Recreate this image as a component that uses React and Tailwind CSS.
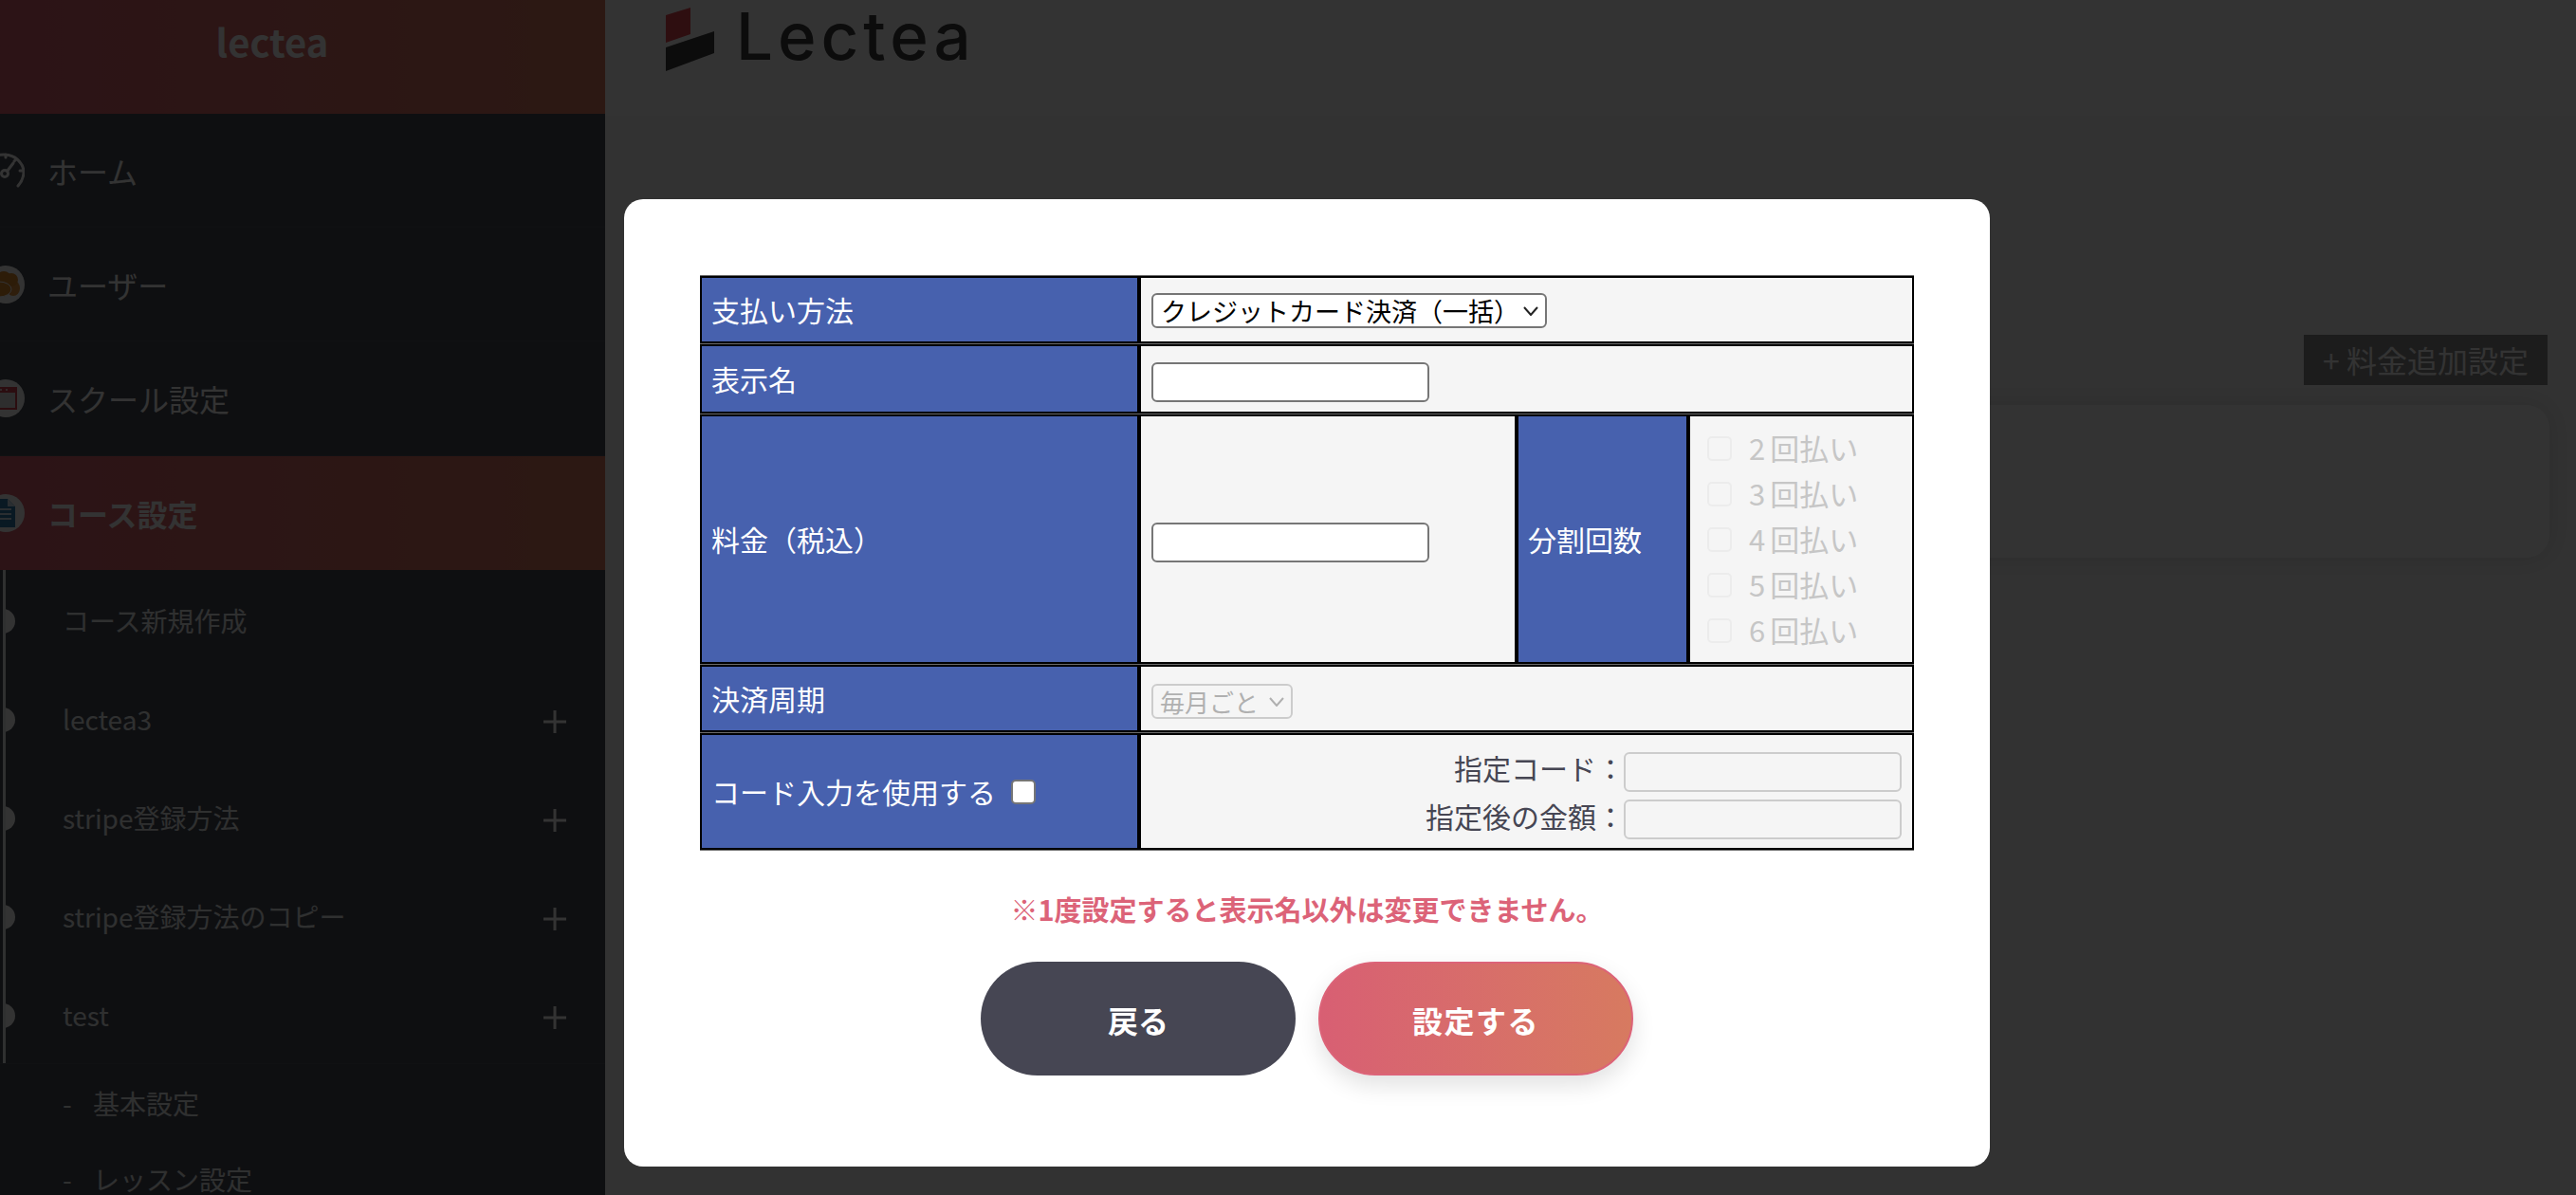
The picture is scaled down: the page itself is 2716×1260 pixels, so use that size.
import React from "react";

function GaugeIcon() {
  return (
    <svg viewBox="0 0 40 40" className="w-[40px] h-[40px] shrink-0 -ml-[14px]" fill="none" stroke="#fff" strokeWidth="3" strokeLinecap="round">
      <path d="M33 36 C40 28 41 18 35 11 C29 3 18 1 8 5 C-2 9 -6 18 -3 28" />
      <circle cx="19" cy="23" r="3.5" />
      <path d="M21.5 20.5 L28 12" />
      <path d="M20 3 V6 M39 20 H35 M31 8 L29 10" />
    </svg>
  );
}

function UserIcon() {
  return (
    <svg viewBox="0 0 40 40" className="w-[40px] h-[40px] shrink-0 -ml-[14px]">
      <circle cx="20" cy="20" r="20" fill="#fff" />
      <ellipse cx="28" cy="24" rx="7" ry="8" fill="#e8963c" />
      <circle cx="18" cy="14" r="8" fill="#e08a2c" />
      <circle cx="26" cy="15" r="7" fill="#e08a2c" />
      <ellipse cx="13" cy="25" rx="13" ry="8" fill="#e08a2c" stroke="#fff" strokeWidth="1" />
    </svg>
  );
}

function WindowIcon() {
  return (
    <svg viewBox="0 0 40 40" className="w-[40px] h-[40px] shrink-0 -ml-[14px]">
      <circle cx="20" cy="20" r="20" fill="#fff" />
      <rect x="-4" y="8" width="36" height="24" fill="#d8434f" />
      <rect x="-2" y="14" width="32" height="16" fill="#e4e4e4" />
      <circle cx="15" cy="11" r="1" fill="#fff" />
      <circle cx="21" cy="11" r="1" fill="#fff" />
    </svg>
  );
}

function DocIcon() {
  return (
    <svg viewBox="0 0 40 40" className="w-[40px] h-[40px] shrink-0 -ml-[14px]">
      <circle cx="20" cy="20" r="20" fill="#fff" />
      <path d="M-4 5 H22 L30 13 V35 H-4 Z" fill="#2f7fb0" />
      <path d="M22 5 L30 13 H22 Z" fill="#cfe6f5" />
      <path d="M0 16 H26 M0 21 H26 M0 26 H26" stroke="#cfe6f5" strokeWidth="2" />
    </svg>
  );
}

function PlusIcon() {
  return (
    <svg viewBox="0 0 24 24" className="w-[24px] h-[24px] shrink-0 ml-auto mr-[41px] mt-[3px]" stroke="#fff" strokeWidth="3">
      <path d="M12 0 V24 M0 12 H24" />
    </svg>
  );
}

function Chevron({ color, className }) {
  return (
    <svg viewBox="0 0 16 10" className={className} fill="none" stroke={color} strokeWidth="2">
      <path d="M1 1 L8 9 L15 1" />
    </svg>
  );
}

const mainItems = [
  { label: "ホーム", icon: <GaugeIcon />, h: "h-[120px]" },
  { label: "ユーザー", icon: <UserIcon />, h: "h-[120px]" },
  { label: "スクール設定", icon: <WindowIcon />, h: "h-[121px]" },
];

const subItems = [
  { label: "コース新規作成", plus: false },
  { label: "lectea3", plus: true },
  { label: "stripe登録方法", plus: true },
  { label: "stripe登録方法のコピー", plus: true },
  { label: "test", plus: true },
];

function Sidebar() {
  return (
    <aside className="w-[638px] shrink-0 h-full bg-[#464b55] text-white overflow-hidden">
      <div className="h-[120px] bg-gradient-to-r from-[#d9606f] to-[#d97a60] flex justify-center pr-[64px] pt-[15px]">
        <span className="text-[40px] leading-[56px] font-bold h-[56px]">lectea</span>
      </div>
      {mainItems.map((it) => (
        <div key={it.label} className={`${it.h} flex items-center gap-[24px] border-b border-white/5 text-[32px]`}>
          {it.icon}
          <span>{it.label}</span>
        </div>
      ))}
      <div className="h-[120px] bg-gradient-to-r from-[#d9606f] to-[#d97a60] flex items-center gap-[24px] text-[32px] font-bold">
        <DocIcon />
        <span>コース設定</span>
      </div>
      <div className="ml-[3px] h-[520px] pt-[2px] border-l-[3px] border-white/90 overflow-hidden">
        {subItems.map((it) => (
          <div key={it.label} className="h-[104px] flex items-center text-[28px] text-white/90">
            <span className="w-[26px] h-[26px] rounded-full bg-white shrink-0 -ml-[16px] mr-[50px]" />
            <span className="-mt-[3px]">{it.label}</span>
            {it.plus && <PlusIcon />}
          </div>
        ))}
      </div>
      <div className="border-t border-white/5 pt-[1px] text-[28px] text-white/90">
        <div className="h-[80px] flex items-center pl-[66px]">
          <span className="w-[32px]">-</span>
          <span>基本設定</span>
        </div>
        <div className="h-[80px] flex items-center pl-[66px]">
          <span className="w-[32px]">-</span>
          <span>レッスン設定</span>
        </div>
      </div>
    </aside>
  );
}

function Main() {
  return (
    <main className="flex-1 h-full bg-[#f8f8f8] flex flex-col">
      <header className="h-[122px] bg-white flex items-start pl-[64px] pt-[8px] gap-[23px]">
        <svg viewBox="0 0 51 67" className="w-[51px] h-[67px] shrink-0">
          <polygon points="0,8 26,0 26,28 0,37" fill="#e6454f" />
          <polygon points="0,42 51,25 51,48 0,67" fill="#3c3c3c" />
        </svg>
        <span className="font-['Inter',sans-serif] text-[69px] leading-[70px] tracking-[5px] font-medium text-[#3c3c3c] mt-[-5px]">Lectea</span>
      </header>
      <div className="flex justify-end pr-[30px] mt-[231px]">
        <button className="h-[53px] w-[257px] bg-[#8c8c8c] text-white text-[32px] leading-[53px] text-center">+ 料金追加設定</button>
      </div>
      <div className="mt-[21px] mx-[50px] mr-[28px] h-[161px] rounded-[24px] bg-white shadow-[0_0_24px_rgba(0,0,0,0.12)]" />
    </main>
  );
}

const th = "bg-[#4761ae] border-2 border-black text-white text-left text-[30px] font-normal px-[10px]";
const td = "bg-[#f5f5f5] border-2 border-black px-[11px]";
const textInput = "block w-[293px] h-[42px] bg-white border-2 border-[#767676] rounded-[6px]";
const codeInput = "block w-[293px] h-[42px] bg-[#f5f5f5] border-2 border-[#cccccc] rounded-[6px]";

function Installment({ n }) {
  return (
    <label className="h-[48px] flex items-center text-[31px] text-[#c6c6c6]">
      <input type="checkbox" disabled className="appearance-none w-[26px] h-[26px] bg-[#f5f5f5] border-2 border-[#ececec] rounded-[5px] mr-[18px]" />
      <span className="tracking-[1px]">{n}</span>
      <span className="ml-[4px]">回払い</span>
    </label>
  );
}

function FormTable() {
  return (
    <table className="w-[1280px] table-fixed border-separate [border-spacing:0_1px] bg-[#6b6b6b]">
      <colgroup>
        <col className="w-[463px]" />
        <col className="w-[398px]" />
        <col className="w-[181px]" />
        <col className="w-[238px]" />
      </colgroup>
      <tbody>
        <tr>
          <th className={`${th} h-[71px]`}>支払い方法</th>
          <td className={`${td} pt-[2px]`} colSpan={3}>
            <div className="relative w-[417px] h-[37px]">
              <select defaultValue="a" className="block appearance-none w-[417px] h-[37px] bg-white border-2 border-[#767676] rounded-[6px] text-[27px] leading-[33px] text-black pl-[8px]">
                <option value="a">クレジットカード決済（一括）</option>
              </select>
              <Chevron color="#222" className="absolute right-[9px] top-[14px] w-[16px] h-[10px] pointer-events-none" />
            </div>
          </td>
        </tr>
        <tr>
          <th className={`${th} h-[73px]`}>表示名</th>
          <td className={`${td} pt-[6px]`} colSpan={3}>
            <input type="text" className={textInput} />
          </td>
        </tr>
        <tr>
          <th className={`${th} h-[263px]`}>料金（税込）</th>
          <td className={`${td} pt-[6px]`}>
            <input type="text" className={textInput} />
          </td>
          <th className={th}>分割回数</th>
          <td className="bg-[#f5f5f5] border-2 border-black pl-[18px]">
            {[2, 3, 4, 5, 6].map((n) => (
              <Installment key={n} n={n} />
            ))}
          </td>
        </tr>
        <tr>
          <th className={`${th} h-[71px]`}>決済周期</th>
          <td className={`${td} pt-[6px]`} colSpan={3}>
            <div className="relative w-[149px] h-[37px]">
              <select disabled defaultValue="m" className="block appearance-none w-[149px] h-[37px] bg-transparent border-2 border-[#cccccc] rounded-[6px] text-[26px] leading-[33px] text-[#b0b0b0] pl-[7px]">
                <option value="m">毎月ごと</option>
              </select>
              <Chevron color="#b0b0b0" className="absolute right-[9px] top-[14px] w-[16px] h-[10px] pointer-events-none" />
            </div>
          </td>
        </tr>
        <tr>
          <th className={`${th} h-[123px]`}>
            <span className="inline-flex items-center">
              コード入力を使用する
              <input type="checkbox" className="appearance-none w-[26px] h-[26px] bg-white border-2 border-[#767676] rounded-[5px] ml-[16px]" />
            </span>
          </th>
          <td className={`${td} pt-[8px]`} colSpan={3}>
            <div className="flex flex-col items-end gap-[8px] text-[30px] text-[#464653]">
              <div className="flex items-center h-[42px]">
                <span className="mr-[-1px] -mt-[9px]">指定コード：</span>
                <input type="text" className={codeInput} />
              </div>
              <div className="flex items-center h-[42px]">
                <span className="mr-[-1px] -mt-[7px]">指定後の金額：</span>
                <input type="text" className={codeInput} />
              </div>
            </div>
          </td>
        </tr>
      </tbody>
    </table>
  );
}

function Modal() {
  return (
    <div className="absolute left-[658px] top-[210px] w-[1440px] h-[1020px] bg-white rounded-[20px] pt-[80px] px-[80px] pb-[96px]">
      <FormTable />
      <p className="mt-[41px] h-[40px] leading-[40px] text-center text-[29px] font-bold text-[#dc6378]">※1度設定すると表示名以外は変更できません。</p>
      <div className="mt-[36px] flex justify-center gap-[24px]">
        <button className="w-[332px] h-[120px] rounded-full bg-[#464653] text-white text-[32px] font-bold pt-[1px]">戻る</button>
        <button className="w-[332px] h-[120px] rounded-full bg-gradient-to-r from-[#d85f73] to-[#d77a60] border-2 border-[#dc6378] text-white text-[32px] font-bold tracking-[1.5px] pt-[1px] shadow-[0_10px_24px_rgba(0,0,0,0.12)]">設定する</button>
      </div>
    </div>
  );
}

export default function App() {
  return (
    <div className="relative w-[2716px] h-[1260px] overflow-hidden flex font-['Noto_Sans_CJK_JP','Noto_Sans',sans-serif]">
      <Sidebar />
      <Main />
      <div className="absolute inset-0 bg-black/80">
        <Modal />
      </div>
    </div>
  );
}
